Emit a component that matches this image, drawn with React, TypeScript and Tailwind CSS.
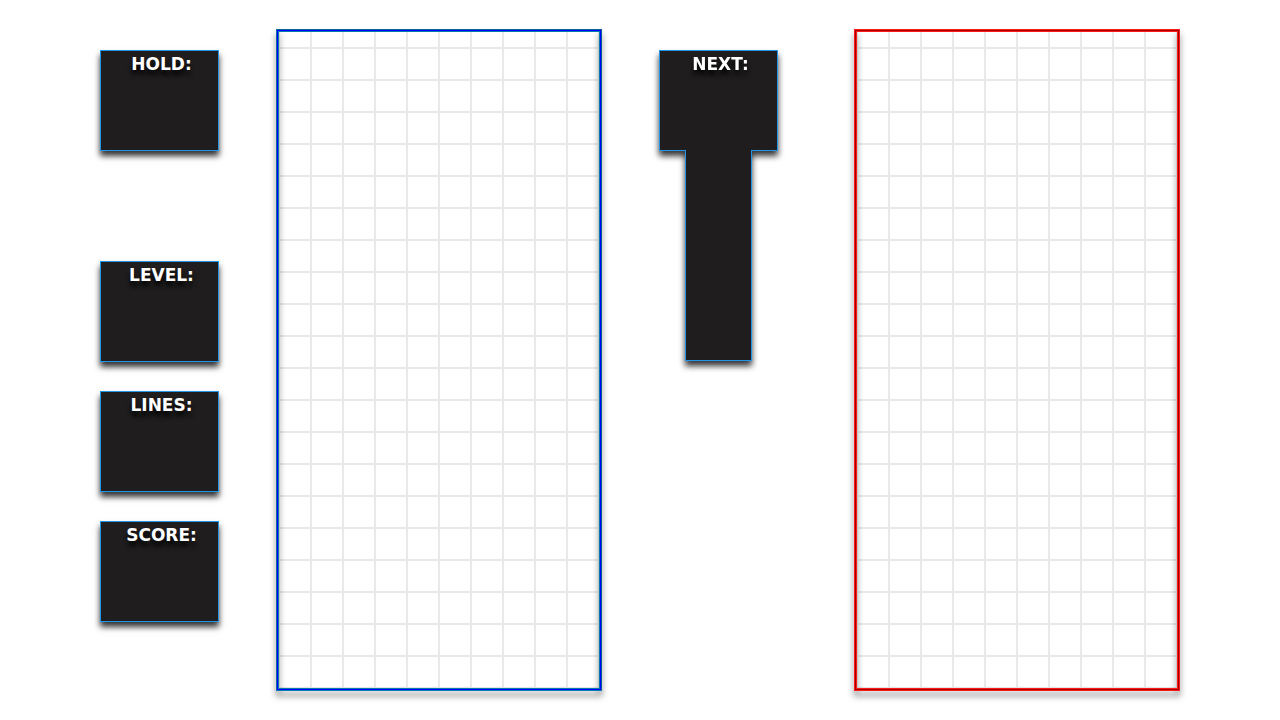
import React from "react";

type Tone = "blue" | "red";

const tones: Record<Tone, { side: string; edge: string; core: string; label: string }> = {
  blue: {
    side: "border-[#0878b0]",
    edge: "border-t-[#0a5f96] border-r-[#0a5f96] border-b-[#0a7cbc] border-l-[#0a6ea5]",
    core: "border-[#0000ff]",
    label: "Player board",
  },
  red: {
    side: "border-[#ff1818]",
    edge: "border-[#ff1818]",
    core: "border-[#a00000]",
    label: "Opponent board",
  },
};

function Title({ children }: { children: React.ReactNode }) {
  return (
    <h2 className="pl-1 pt-[5px] text-center text-[17px] leading-4 text-white [text-shadow:0_5px_5px_#000]">
      {children}
    </h2>
  );
}

function Panel({ title }: { title: string }) {
  return (
    <section className="h-[101px] w-[119px] border border-[#2196e8] bg-[#1f1d1e] shadow-[0_5px_6px_rgba(0,0,0,0.8)]">
      <Title>{title}</Title>
    </section>
  );
}

function NextPanel() {
  return (
    <section className="flex w-[119px] flex-col items-center drop-shadow-[0_5px_3px_rgba(0,0,0,0.8)]">
      <div className="h-[101px] w-full border border-[#2196e8] bg-[#1f1d1e]">
        <Title>NEXT:</Title>
      </div>
      <div className="-mt-px mr-px h-[211px] w-[67px] border border-t-0 border-[#2196e8] bg-[#1f1d1e]" />
    </section>
  );
}

function Board({ tone }: { tone: Tone }) {
  const t = tones[tone];
  return (
    <section
      aria-label={t.label}
      className="relative h-[662px] w-[326px] bg-[linear-gradient(to_right,#e9e9e9_2px,transparent_2px),linear-gradient(to_bottom,#e9e9e9_2px,transparent_2px)] bg-[size:32px_32px] bg-[position:2px_18px]"
    >
      <div className="absolute inset-0 border-x-[3px] border-b-[3px] border-black drop-shadow-[0_5px_3px_rgba(0,0,0,0.5)]" />
      <div className={`relative h-full border ${t.edge}`}>
        <div className={`h-full border ${t.core}`}>
          <div className={`h-full border ${t.side}`} />
        </div>
      </div>
    </section>
  );
}

export default function App() {
  return (
    <main className="flex min-h-screen items-start justify-center bg-white pt-[29px] font-['DejaVu_Sans',sans-serif] font-bold">
      <div className="mr-[57px] flex flex-col gap-[29px] pt-[21px]">
        <div className="pb-[81px]">
          <Panel title="HOLD:" />
        </div>
        <Panel title="LEVEL:" />
        <Panel title="LINES:" />
        <Panel title="SCORE:" />
      </div>
      <Board tone="blue" />
      <div className="ml-[57px] mr-[76px] pt-[21px]">
        <NextPanel />
      </div>
      <Board tone="red" />
    </main>
  );
}
